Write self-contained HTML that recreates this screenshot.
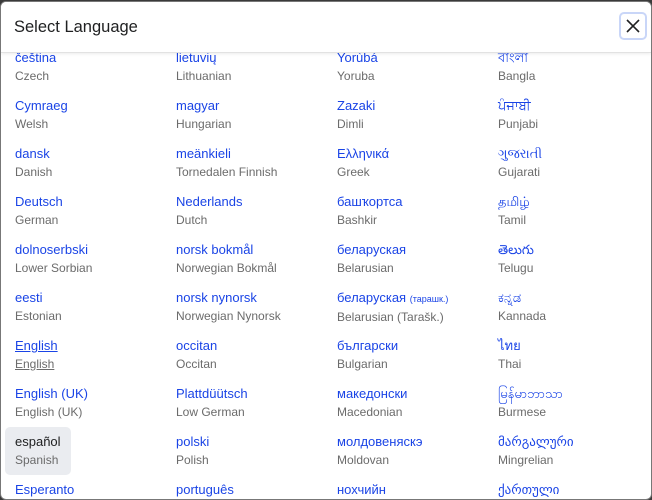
<!DOCTYPE html>
<html><head><meta charset="utf-8"><style>
html,body{margin:0;padding:0;width:652px;height:500px;overflow:hidden;background:#3a3a3a;font-family:"Liberation Sans","Noto Sans CJK SC","DejaVu Sans",sans-serif}
.dlg{position:absolute;left:0;top:1px;width:650px;height:497px;background:#fff;border:1px solid #777;border-radius:6px;overflow:hidden}
.hdr{position:absolute;left:0;top:0;width:650px;height:50px;background:#fff;border-bottom:1px solid #e2e2e2;box-shadow:0 1px 3px rgba(0,0,0,0.08);z-index:2}
.hdr h1{margin:0;position:absolute;left:13px;top:14px;font-size:16.5px;font-weight:normal;color:#202122;line-height:22px}
.x{position:absolute;left:618px;top:10px;width:24px;height:24px;border:2px solid #c9d6f8;border-radius:5px;background:#fff}
.list{position:absolute;left:-1px;top:41px;width:650px}
.row{height:48px;position:relative}
.it{position:absolute;top:0;height:36px;padding:6px 10px;box-sizing:content-box;border-radius:5px}
.it .n{display:block;font-size:13px;line-height:18px;color:#1a44e6;white-space:nowrap}
.it .e{display:block;font-size:12px;line-height:18px;color:#6b6b6b;white-space:nowrap}
.c0{left:5px}.c1{left:166px}.c2{left:327px}.c3{left:488px}
.sel{background:#eaecf0}.sel .n{color:#202122}
.u{text-decoration:underline}
small{font-size:9px}
</style></head><body>
<div class="dlg">
<div class="hdr"><h1>Select Language</h1>
<div class="x"><svg width="24" height="24" viewBox="0 0 24 24"><path d="M6 6L18 18M18 6L6 18" stroke="#202122" stroke-width="1.6"/></svg></div></div>
<div class="list">
<div class="row"><div class="it c0"><span class="n">čeština</span><span class="e">Czech</span></div><div class="it c1"><span class="n">lietuvių</span><span class="e">Lithuanian</span></div><div class="it c2"><span class="n">Yorùbá</span><span class="e">Yoruba</span></div><div class="it c3"><span class="n">বাংলা</span><span class="e">Bangla</span></div></div>
<div class="row"><div class="it c0"><span class="n">Cymraeg</span><span class="e">Welsh</span></div><div class="it c1"><span class="n">magyar</span><span class="e">Hungarian</span></div><div class="it c2"><span class="n">Zazaki</span><span class="e">Dimli</span></div><div class="it c3"><span class="n">ਪੰਜਾਬੀ</span><span class="e">Punjabi</span></div></div>
<div class="row"><div class="it c0"><span class="n">dansk</span><span class="e">Danish</span></div><div class="it c1"><span class="n">meänkieli</span><span class="e">Tornedalen Finnish</span></div><div class="it c2"><span class="n">Ελληνικά</span><span class="e">Greek</span></div><div class="it c3"><span class="n">ગુજરાતી</span><span class="e">Gujarati</span></div></div>
<div class="row"><div class="it c0"><span class="n">Deutsch</span><span class="e">German</span></div><div class="it c1"><span class="n">Nederlands</span><span class="e">Dutch</span></div><div class="it c2"><span class="n">башҡортса</span><span class="e">Bashkir</span></div><div class="it c3"><span class="n">தமிழ்</span><span class="e">Tamil</span></div></div>
<div class="row"><div class="it c0"><span class="n">dolnoserbski</span><span class="e">Lower Sorbian</span></div><div class="it c1"><span class="n">norsk bokmål</span><span class="e">Norwegian Bokmål</span></div><div class="it c2"><span class="n">беларуская</span><span class="e">Belarusian</span></div><div class="it c3"><span class="n">తెలుగు</span><span class="e">Telugu</span></div></div>
<div class="row"><div class="it c0"><span class="n">eesti</span><span class="e">Estonian</span></div><div class="it c1"><span class="n">norsk nynorsk</span><span class="e">Norwegian Nynorsk</span></div><div class="it c2"><span class="n">беларуская <small>(тарашк.)</small></span><span class="e">Belarusian (Tarašk.)</span></div><div class="it c3"><span class="n">ಕನ್ನಡ</span><span class="e">Kannada</span></div></div>
<div class="row"><div class="it c0"><span class="n u">English</span><span class="e u">English</span></div><div class="it c1"><span class="n">occitan</span><span class="e">Occitan</span></div><div class="it c2"><span class="n">български</span><span class="e">Bulgarian</span></div><div class="it c3"><span class="n">ไทย</span><span class="e">Thai</span></div></div>
<div class="row"><div class="it c0"><span class="n">English (UK)</span><span class="e">English (UK)</span></div><div class="it c1"><span class="n">Plattdüütsch</span><span class="e">Low German</span></div><div class="it c2"><span class="n">македонски</span><span class="e">Macedonian</span></div><div class="it c3"><span class="n">မြန်မာဘာသာ</span><span class="e">Burmese</span></div></div>
<div class="row"><div class="it c0 sel"><span class="n">español</span><span class="e">Spanish</span></div><div class="it c1"><span class="n">polski</span><span class="e">Polish</span></div><div class="it c2"><span class="n">молдовеняскэ</span><span class="e">Moldovan</span></div><div class="it c3"><span class="n">მარგალური</span><span class="e">Mingrelian</span></div></div>
<div class="row"><div class="it c0"><span class="n">Esperanto</span><span class="e">Esperanto</span></div><div class="it c1"><span class="n">português</span><span class="e">Portuguese</span></div><div class="it c2"><span class="n">нохчийн</span><span class="e">Chechen</span></div><div class="it c3"><span class="n">ქართული</span><span class="e">Georgian</span></div></div>
</div>
</div>
</body></html>
